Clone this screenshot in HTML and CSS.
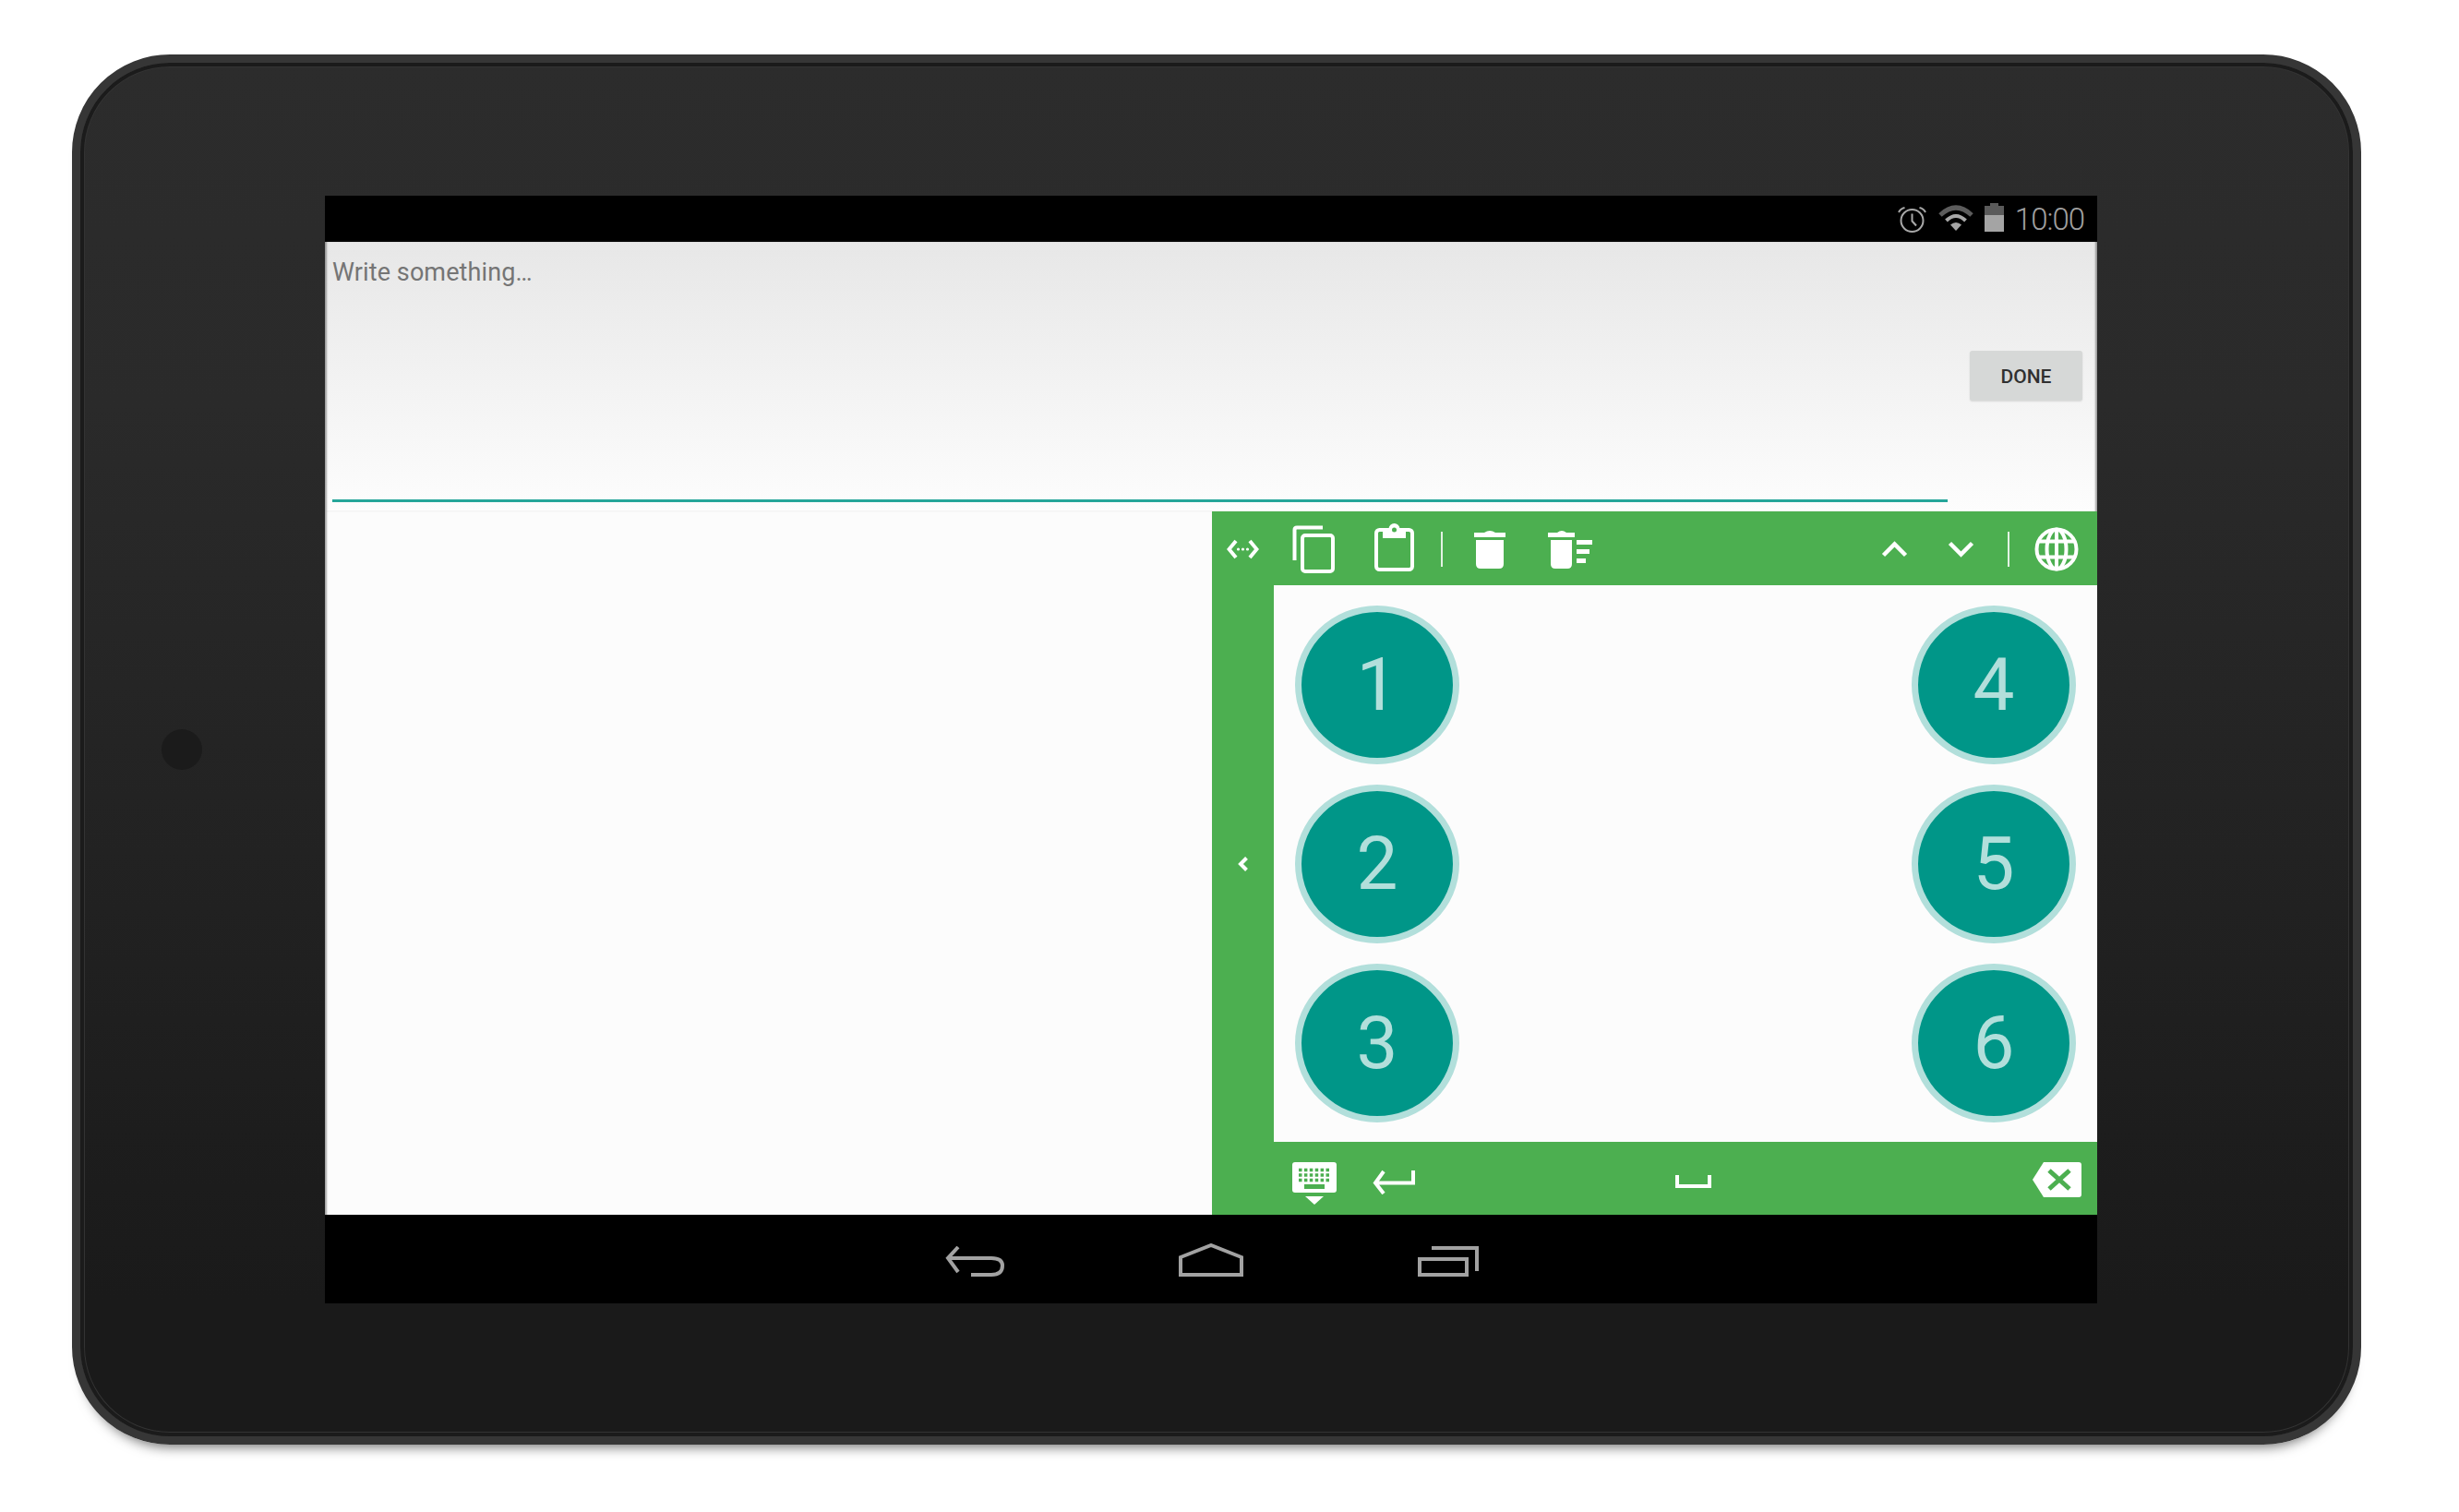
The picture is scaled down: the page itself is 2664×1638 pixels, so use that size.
FILE: index.html
```html
<!DOCTYPE html>
<html lang="en">
<head>
    <meta charset="UTF-8">
    <title>Keyboard on tablet</title>
    <link rel="stylesheet" href="styles.css">
</head>
<body>
    <div class="tablet">
        <div class="camera"></div>
        <div class="screen">
            <!-- Status bar -->
            <div class="status-bar">
                <svg class="st-alarm" viewBox="0 0 31 28">
                    <circle class="line-grey" cx="15.5" cy="15" r="12"/>
                    <path class="line-grey" d="M15.5 7.5V15.5L20 20.5M1 6Q3 2 7.5 1M30 6Q28 2 23.5 1"/>
                </svg>
                <svg class="st-wifi" viewBox="0 0 38 28">
                    <path class="wifi-outer" d="M2 11Q19 -5 36 11"/>
                    <path class="wifi-inner" d="M8.5 17Q19 7 29.5 17"/>
                    <path class="fill-grey" d="M13 21.5Q19 16.500 25 21.500L19 28Z"/>
                </svg>
                <svg class="st-battery" viewBox="0 0 21 31">
                    <path class="fill-dim" d="M6 0H15V3H21V13H0V3H6Z"/>
                    <rect class="fill-grey" x="0" y="13" width="21" height="18"/>
                </svg>
                <span class="clock">10:00</span>
            </div>

            <!-- Text field -->
            <div class="edit-area">
                <div class="edit-field">Write something…</div>
                <button class="done-btn" type="button">DONE</button>
            </div>

            <div class="lower">
                <div class="blank"></div>
                <div class="panel">
                    <div class="top-bar">
                        <svg class="ic-code" viewBox="0 0 35 24">
                            <path class="line" d="M10 3L2.500 12L10 21M25 3L32.500 12L25 21"/>
                            <circle class="fill" cx="12.500" cy="12" r="1.600"/>
                            <circle class="fill" cx="17.500" cy="12" r="1.600"/>
                            <circle class="fill" cx="22.500" cy="12" r="1.600"/>
                        </svg>
                        <svg class="ic-copy" viewBox="0 0 46 52">
                            <path class="line" d="M33 2.500H5Q2.500 2.500 2.500 5V38"/>
                            <rect class="line" x="11" y="11" width="33" height="39" rx="3"/>
                        </svg>
                        <svg class="ic-paste" viewBox="0 0 43 52">
                            <rect class="line" x="2" y="7" width="39" height="43" rx="3.500"/>
                            <path class="fill" d="M9 6H15.500A6 6 0 0 1 27.500 6H34V16H9Z"/>
                            <circle class="hole" cx="21.500" cy="7" r="2.500"/>
                        </svg>
                        <div class="sep sep-left"></div>
                        <svg class="ic-trash" viewBox="0 0 34 42">
                            <path class="fill" d="M0 3H11Q17 -1 23 3H34V8H0ZM2 11H32V37Q32 42 27 42H7Q2 42 2 37Z"/>
                        </svg>
                        <svg class="ic-clear" viewBox="0 0 48 42">
                            <path class="fill" d="M0 3H10Q15 -1 20 3H29V8H0ZM3 11H26V37Q26 42 21 42H8Q3 42 3 37Z"/>
                            <rect class="fill" x="31" y="11" width="17" height="5"/>
                            <rect class="fill" x="31" y="21" width="14" height="5"/>
                            <rect class="fill" x="31" y="31" width="10" height="5"/>
                        </svg>
                        <div class="right-tools">
                            <svg class="ic-chev" viewBox="0 0 29 18">
                                <path class="line-thick" d="M2.500 15.500L14.500 3.500L26.500 15.500"/>
                            </svg>
                            <svg class="ic-chev ic-chev-down" viewBox="0 0 29 18">
                                <path class="line-thick" d="M2.500 2.500L14.500 14.500L26.500 2.500"/>
                            </svg>
                            <div class="sep sep-right"></div>
                            <svg class="ic-globe" viewBox="0 0 48 48">
                                <circle class="line" cx="24" cy="24" r="21.500"/>
                                <ellipse class="line" cx="24" cy="24" rx="10.500" ry="21.500"/>
                                <path class="line" d="M24 2.500V45.500M5 15.500H43M5 32.500H43"/>
                            </svg>
                        </div>
                    </div>
                    <div class="middle">
                        <div class="side-col">
                            <svg class="ic-back" viewBox="0 0 12 18">
                                <path class="line" d="M9.500 2.500L3 9L9.500 15.500"/>
                            </svg>
                        </div>
                        <div class="pad">
                            <div class="keys">
                                <div class="key">1</div>
                                <div class="key">2</div>
                                <div class="key">3</div>
                            </div>
                            <div class="keys">
                                <div class="key">4</div>
                                <div class="key">5</div>
                                <div class="key">6</div>
                            </div>
                        </div>
                    </div>
                    <div class="bottom-bar">
                        <svg class="ic-keyboard" viewBox="0 0 48 46">
                            <rect class="fill" x="0" y="0" width="48" height="33" rx="3"/>
                            <path class="dots" d="M7 8.500H41M7 14H41M7 19.500H41"/>
                            <rect class="hole" x="13" y="24" width="22" height="5"/>
                            <path class="fill" d="M14 37H34L24 46Z"/>
                        </svg>
                        <svg class="ic-enter" viewBox="0 0 46 27">
                            <path class="line" d="M44 1V14.500H3M12 2L3 14.500L12 26"/>
                        </svg>
                        <svg class="ic-space" viewBox="0 0 39 14">
                            <path class="line" d="M2 0V12H37V0"/>
                        </svg>
                        <svg class="ic-del" viewBox="0 0 53 38">
                            <path class="fill" d="M12 0H50Q53 0 53 3V35Q53 38 50 38H12L0 19Z"/>
                            <path class="x-mark" d="M18 9L40 29M40 9L18 29"/>
                        </svg>
                    </div>
                </div>
            </div>

            <!-- Android nav -->
            <div class="nav-bar">
                <svg class="nav-back" viewBox="0 0 64 33">
                    <path class="nav-line" d="M28 31H50Q62 31 62 21Q62 13 50 13H3M14 1L3 13L14 28"/>
                </svg>
                <svg class="nav-home" viewBox="0 0 70 36">
                    <path class="nav-line" d="M2 34V15L35 2L68 15V34Z"/>
                </svg>
                <svg class="nav-recent" viewBox="0 0 66 33">
                    <rect class="nav-line" x="2" y="14" width="51" height="17"/>
                    <path class="nav-line" d="M15 2H64V27"/>
                </svg>
            </div>
        </div>
    </div>
</body>
</html>
```

FILE: styles.css
```css
* {
    box-sizing: border-box;
}
body {
    margin: 0;
    height: 1638px;
    padding: 59px 0 0 78px;
    background-color: #fff;
    overflow: hidden;
    font-family: Roboto, "Liberation Sans", sans-serif;
}
svg {
    display: block;
    flex: none;
}

/* device */
.tablet {
    display: flex;
    align-items: center;
    width: 2480px;
    height: 1506px;
    padding-left: 88px;
    border: 9px solid #363636;
    border-radius: 106px;
    background: linear-gradient(#2c2c2c 0%, #2a2a2a 25%, #1a1a1a 90%);
    box-shadow: inset 0 0 0 4px #1b1b1b, inset 0 0 0 5px #333, 0 14px 14px -12px rgba(0, 0, 0, 0.6);
}
.camera {
    width: 44px;
    height: 44px;
    margin-right: 133px;
    border-radius: 50%;
    background: #1b1b1b;
}
.screen {
    display: flex;
    flex-direction: column;
    width: 1920px;
    height: 1200px;
    background: #fcfcfc;
}

/* status bar */
.status-bar {
    display: flex;
    align-items: flex-start;
    height: 50px;
    background: #000;
    padding: 10px 14px 0 0;
    justify-content: flex-end;
}
.st-alarm {
    width: 31px;
    height: 28px;
    margin-top: 2px;
}
.st-wifi {
    width: 38px;
    height: 28px;
    margin-left: 13px;
}
.st-battery {
    width: 21px;
    height: 31px;
    margin: -2px 0 0 12px;
}
.clock {
    margin: -2px 0 0 12px;
    font-size: 33px;
    font-weight: 300;
    letter-spacing: -1px;
    line-height: 36px;
    color: #a0a0a0;
}
.line-grey {
    fill: none;
    stroke: #a8a8a8;
    stroke-width: 2;
}
.wifi-outer {
    fill: none;
    stroke: #5c5c5c;
    stroke-width: 5;
}
.wifi-inner {
    fill: none;
    stroke: #a8a8a8;
    stroke-width: 4;
}
.fill-grey {
    fill: #a4a4a4;
}
.fill-dim {
    fill: #5a5a5a;
}

/* text field */
.edit-area {
    display: flex;
    height: 292px;
    padding-left: 8px;
    background: linear-gradient(#e7e7e7, #fdfdfd);
    box-shadow: inset 3px 0 2px -1px rgba(0, 0, 0, 0.35), inset -3px 0 2px -1px rgba(0, 0, 0, 0.35);
}
.edit-field {
    width: 1750px;
    height: 282px;
    padding-top: 17px;
    border-bottom: 3px solid #26a69a;
    font-size: 27px;
    letter-spacing: 0.1px;
    line-height: 32px;
    color: #757575;
}
.done-btn {
    width: 122px;
    height: 54px;
    margin: 118px 0 0 24px;
    padding: 2px 0 0;
    border: none;
    border-radius: 3px;
    background: #d6d8d7;
    box-shadow: 0 1px 2px rgba(0, 0, 0, 0.12);
    font-family: Roboto, sans-serif;
    font-size: 21px;
    font-weight: 500;
    color: #303030;
}

/* keyboard panel */
.lower {
    display: flex;
    flex: 1;
}
.blank {
    flex: 1;
    background: #fcfcfc;
    box-shadow: inset 3px 0 2px -1px rgba(0, 0, 0, 0.35);
}
.panel {
    display: flex;
    flex-direction: column;
    width: 959px;
    background: #4caf50;
}
.top-bar {
    display: flex;
    align-items: center;
    height: 80px;
    padding: 2px 20px 0 16px;
}
.right-tools {
    display: flex;
    align-items: center;
    margin-left: auto;
}
.ic-code {
    width: 35px;
    height: 24px;
}
.ic-copy {
    width: 46px;
    height: 52px;
    margin-left: 36px;
}
.ic-paste {
    width: 43px;
    height: 52px;
    margin: -4px 0 0 43px;
}
.sep {
    width: 2px;
    height: 38px;
    background: #e3f2e4;
}
.sep-left {
    margin-left: 29px;
}
.ic-trash {
    width: 34px;
    height: 42px;
    margin-left: 34px;
}
.ic-clear {
    width: 48px;
    height: 42px;
    margin-left: 46px;
}
.ic-chev {
    width: 29px;
    height: 18px;
}
.ic-chev-down {
    margin-left: 43px;
}
.sep-right {
    margin-left: 36px;
}
.ic-globe {
    width: 48px;
    height: 48px;
    margin-left: 27px;
}
.middle {
    display: flex;
    flex: 1;
}
.side-col {
    display: flex;
    align-items: center;
    justify-content: center;
    width: 67px;
}
.ic-back {
    width: 12px;
    height: 18px;
}
.pad {
    display: flex;
    flex: 1;
    justify-content: space-between;
    padding: 22px 23px 21px;
    background: #fcfcfc;
}
.keys {
    display: flex;
    flex-direction: column;
    gap: 22px;
}
.key {
    display: flex;
    align-items: center;
    justify-content: center;
    width: 178px;
    height: 172px;
    border: 7px solid #b2dfdb;
    border-radius: 50%;
    background: #009688;
    font-size: 80px;
    font-weight: 400;
    color: #b2dfdb;
}
.bottom-bar {
    display: flex;
    align-items: flex-start;
    height: 79px;
    padding: 0 17px 0 87px;
}
.ic-keyboard {
    width: 48px;
    height: 46px;
    margin-top: 22px;
}
.ic-enter {
    width: 46px;
    height: 27px;
    margin: 30px 0 0 39px;
}
.ic-space {
    width: 39px;
    height: 14px;
    margin: 36px 0 0 282px;
}
.ic-del {
    width: 53px;
    height: 38px;
    margin: 22px 0 0 auto;
}
.line {
    fill: none;
    stroke: #fff;
    stroke-width: 4;
}
.line-thick {
    fill: none;
    stroke: #fff;
    stroke-width: 4.5;
}
.fill {
    fill: #fff;
}
.hole {
    fill: #4caf50;
}
.dots {
    fill: none;
    stroke: #4caf50;
    stroke-width: 3.5;
    stroke-dasharray: 3.5 2.400;
}
.x-mark {
    fill: none;
    stroke: #4caf50;
    stroke-width: 5;
}

/* nav bar */
.nav-bar {
    display: flex;
    align-items: flex-start;
    justify-content: center;
    gap: 189px;
    height: 96px;
    padding-top: 31px;
    padding-left: 2px;
    background: #000;
}
.nav-back {
    width: 64px;
    height: 33px;
    margin-top: 3px;
}
.nav-home {
    width: 70px;
    height: 36px;
}
.nav-recent {
    width: 66px;
    height: 33px;
    margin-top: 3px;
}
.nav-line {
    fill: none;
    stroke: #a2a2a2;
    stroke-width: 4;
}
```
